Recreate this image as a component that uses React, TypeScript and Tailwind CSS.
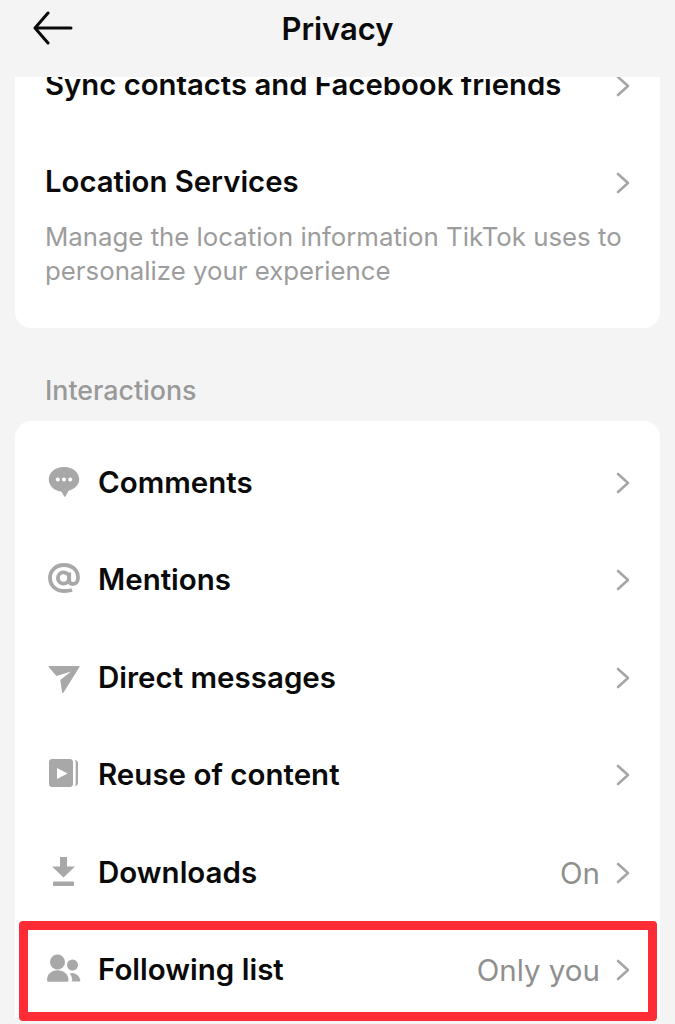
const font = { fontFamily: 'Inter, "Liberation Sans", sans-serif' };

function Chevron() {
  return (
    <svg width="16" height="24" viewBox="0 0 16 24" fill="none" className="mt-[2px] shrink-0">
      <path d="M3 3l10 9-10 9" stroke="#a6a6a6" strokeWidth="2.6" strokeLinecap="round" strokeLinejoin="round" />
    </svg>
  );
}

function CommentIcon() {
  return (
    <svg width="32" height="32" viewBox="0 0 32 32" fill="#a8a8a8">
      <path d="M16 1C7.2 1 .8 6.5.8 13.400c0 6.600 5.700 11.400 12.600 12.100l2.700 4.800c.3.600 1 .6 1.300.1l3.200-5.700c5.900-1.700 10.600-6 10.600-11.300C31.200 6.500 24.800 1 16 1z" />
      <circle cx="9.800" cy="13.500" r="2" fill="#fff" />
      <circle cx="16" cy="13.500" r="2" fill="#fff" />
      <circle cx="22.200" cy="13.500" r="2" fill="#fff" />
    </svg>
  );
}

function MentionIcon() {
  return (
    <svg width="32" height="32" viewBox="0 0 32 32" fill="none" stroke="#a8a8a8" strokeWidth="3.800">
      <path d="M24 27c-2.500.8-5 1-7.500 1C8 28 2 22.500 2 15S8 2 16 2s14 5 14 12.500c0 4-2.200 6.500-5 6.500-2.300 0-3.800-1.500-3.800-3.800V9.500" />
      <circle cx="15.500" cy="15" r="5.600" />
    </svg>
  );
}

function SendIcon() {
  return (
    <svg width="32" height="32" viewBox="0 0 32 32" fill="#a8a8a8">
      <path d="M1 5h30c.5 0 .8.500.5 1L15.600 31.500c-.4.700-1.400.5-1.500-.3L12.300 19 23 10.500 8.500 15 .6 6c-.4-.4 0-1 .4-1z" />
    </svg>
  );
}

function ReuseIcon() {
  return (
    <svg width="32" height="32" viewBox="0 0 32 32" fill="#a8a8a8">
      <path d="M4 1h18c1.700 0 3 1.300 3 3v22c0 1.700-1.300 3-3 3H4c-1.700 0-3-1.300-3-3V4c0-1.700 1.300-3 3-3z" />
      <path d="M9 10v11l10.500-5.500z" fill="#fff" />
      <path d="M27 2c1.800.3 3 1.300 3 3v20c0 1.700-1.200 2.700-3 3 .5-.8.700-1.800.7-3V5c0-1.200-.2-2.200-.7-3z" />
    </svg>
  );
}

function DownloadIcon() {
  return (
    <svg width="32" height="32" viewBox="0 0 32 32" fill="#a8a8a8">
      <path d="M12 1h7v9.500h8L15.500 21.500 4 10.500h8z" />
      <rect x="5" y="25.500" width="21" height="4.500" rx="1" />
    </svg>
  );
}

function PeopleIcon() {
  return (
    <svg width="32" height="32" viewBox="0 0 32 32" fill="#a8a8a8" className="overflow-visible">
      <circle cx="9.500" cy="9" r="7.500" />
      <path d="M-1 27c0-6 4.500-9.800 10.500-9.800S20.500 21 20.500 27c0 1-.6 1.800-1.500 1.800H.5C-.4 28.800-1 28-1 27z" />
      <circle cx="24.500" cy="12" r="5.500" />
      <path d="M23 28.500h8c1 0 1.500-.6 1.300-1.500-.7-3.500-3.500-6.300-7-6.800-1.300-.2-2.500 0-3.600.4 1.700 2 2.500 4.300 2.500 6.400 0 .6-.3 1.100-.9 1.500z" />
    </svg>
  );
}

const rows = [
  { label: 'Comments', icon: CommentIcon },
  { label: 'Mentions', icon: MentionIcon },
  { label: 'Direct messages', icon: SendIcon },
  { label: 'Reuse of content', icon: ReuseIcon },
  { label: 'Downloads', icon: DownloadIcon, value: 'On' },
  { label: 'Following list', icon: PeopleIcon, value: 'Only you', highlight: true },
];

export default function App() {
  return (
    <div className="h-[1024px] w-[675px] overflow-hidden bg-[#f4f4f4] text-[#0a0a0a]" style={font}>
      {/* Header */}
      <header className="relative flex h-[77px] items-center justify-center pb-[20px]">
        <svg width="40" height="34" viewBox="0 0 40 34" fill="none" className="absolute left-[33px] top-[11px]">
          <path d="M38 17H3M15 2L2 17l13 15" stroke="#0a0a0a" strokeWidth="3" strokeLinecap="round" strokeLinejoin="round" />
        </svg>
        <h1 className="text-[31px] font-semibold leading-9">Privacy</h1>
      </header>

      {/* Top card */}
      <section className="mx-[15px] h-[251px] overflow-hidden rounded-b-[16px] bg-white pl-[30px] pr-[29px]">
        <div className="-mt-[10px] flex h-9 items-center justify-between">
          <span className="text-[29.300px] font-semibold">Sync contacts and Facebook friends</span>
          <Chevron />
        </div>
        <div className="mt-[61px] flex h-9 items-center justify-between">
          <span className="text-[29.300px] font-semibold">Location Services</span>
          <Chevron />
        </div>
        <p className="mt-[20px] text-[25.800px] leading-[34px] text-[#9c9c9c]">
          Manage the location information TikTok uses to personalize your experience
        </p>
      </section>

      <h2 className="ml-[45px] mt-[46px] text-[26.800px] font-medium leading-8 text-[#999999]">Interactions</h2>

      {/* Interactions card */}
      <section className="mx-[15px] mt-[15px] rounded-t-[16px] bg-white pt-[12px]">
        {rows.map((row) => (
          <div key={row.label} className="relative flex h-[97.500px] items-center pl-[33px] pr-[29px]">
            <span className="mr-[18px] shrink-0">
              <row.icon />
            </span>
            <span className="flex-1 text-[29.500px] font-semibold">{row.label}</span>
            {row.value && <span className="mr-[15px] mt-[2px] text-[29.500px] text-[#8f8f8f]">{row.value}</span>}
            <Chevron />
            {row.highlight && (
              <div className="absolute -bottom-[3px] left-[4px] right-[3px] top-0 rounded-[4px] border-[9px] border-[#fe2c35]" />
            )}
          </div>
        ))}
      </section>
    </div>
  );
}
